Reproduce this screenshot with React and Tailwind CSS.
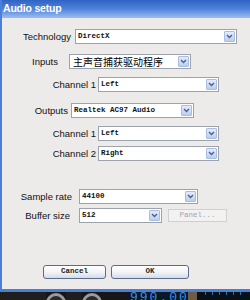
import React from 'react';

const mono = { fontFamily: '"Liberation Mono", monospace' };

const Select = ({ value, width, cjk }) => (
    <div className={`flex h-full items-stretch border border-[#9da3ad] bg-white ${width}`}>
        <span
            className={cjk
                ? 'flex flex-1 items-center pl-[3px] text-[10px] leading-none text-black [font-family:"Noto_Sans_CJK_SC",sans-serif]'
                : 'flex flex-1 items-center pl-[2px] text-[7.5px] font-bold leading-none text-[#111] [font-family:"Liberation_Mono",monospace]'}
        >
            {value}
        </span>
        <span className="m-[1px] flex w-[11px] items-center justify-center rounded-[1px] border border-[#a9bde0] bg-gradient-to-b from-[#e4ecfb] to-[#bccdf0]">
            <svg width="7" height="5" viewBox="0 0 7 5">
                <path d="M1 1 L3.5 3.5 L6 1" fill="none" stroke="#4d6185" strokeWidth="1.4" />
            </svg>
        </span>
    </div>
);

const Row = ({ label, labelW, gap, mt, children }) => (
    <div className={`flex h-[15px] items-center ${mt}`}>
        <span className={`shrink-0 text-right text-[9.5px] leading-none text-[#111] ${labelW}`}>{label}</span>
        <div className={`flex h-full items-center ${gap}`}>{children}</div>
    </div>
);

const Button = ({ children, width }) => (
    <div
        className={`flex h-[14px] items-center justify-center rounded-[3px] border border-[#5a6e8c] bg-gradient-to-b from-white via-[#f3f4f8] to-[#d4dbe8] text-[7.5px] font-bold text-[#222] ${width}`}
        style={mono}
    >
        {children}
    </div>
);

export default function App() {
    return (
        <div className="flex h-[300px] w-[250px] flex-col overflow-hidden bg-[#161616] [font-family:'Liberation_Sans',sans-serif]">
            <div className="flex h-[292px] flex-col border-b-[3px] border-l-2 border-[#4a7fd6]">
                <div className="flex h-[18px] items-center bg-gradient-to-b from-[#2f63c4] via-[#4f83da] to-[#9dbdf0] pl-[1px]">
                    <span className="text-[10.5px] font-bold tracking-[-0.2px] text-white">Audio setup</span>
                </div>
                <div className="flex flex-1 flex-col bg-[#edeaea]">
                    <Row label="Technology" labelW="w-[69px]" gap="ml-[4px]" mt="mt-[11px]">
                        <Select value="DirectX" width="w-[162px]" />
                    </Row>
                    <Row label="Inputs" labelW="w-[56px]" gap="ml-[11px]" mt="mt-[10px]">
                        <Select value="主声音捕获驱动程序" width="w-[122px]" cjk />
                    </Row>
                    <Row label="Channel 1" labelW="w-[94px]" gap="ml-[2px]" mt="mt-[8px]">
                        <Select value="Left" width="w-[121px]" />
                    </Row>
                    <Row label="Outputs" labelW="w-[66px]" gap="ml-[3px]" mt="mt-[11px]">
                        <Select value="Realtek AC97 Audio" width="w-[123px]" />
                    </Row>
                    <Row label="Channel 1" labelW="w-[94px]" gap="ml-[2px]" mt="mt-[8px]">
                        <Select value="Left" width="w-[121px]" />
                    </Row>
                    <Row label="Channel 2" labelW="w-[94px]" gap="ml-[2px]" mt="mt-[5px]">
                        <Select value="Right" width="w-[121px]" />
                    </Row>
                    <Row label="Sample rate" labelW="w-[70px]" gap="ml-[7px]" mt="mt-[28px]">
                        <Select value="44100" width="w-[119px]" />
                    </Row>
                    <Row label="Buffer size" labelW="w-[68px]" gap="ml-[9px]" mt="mt-[4px]">
                        <Select value="512" width="w-[83px]" />
                        <div
                            className="ml-[6px] flex h-[13px] w-[59px] items-center justify-center border border-[#cfd0d4] bg-[#f3f2f2] text-[7.5px] text-[#a4a4a4]"
                            style={mono}
                        >
                            Panel...
                        </div>
                    </Row>
                    <div className="mt-[42px] flex gap-[5px] pl-[41px]">
                        <Button width="w-[63px]">Cancel</Button>
                        <Button width="w-[78px]">OK</Button>
                    </div>
                </div>
            </div>
            <div className="flex h-[8px] items-start">
                <div className="h-full w-[46px] bg-[#1e1e1e]" />
                <div className="mt-[1px] h-[20px] w-[20px] shrink-0 rounded-full border-[3px] border-[#9a9a9a] bg-[#2a2a2a]" />
                <div className="h-full w-[16px] bg-[#1e1e1e]" />
                <div className="mt-[1px] h-[20px] w-[20px] shrink-0 rounded-full border-[3px] border-[#9a9a9a] bg-[#2a2a2a]" />
                <div className="h-full w-[26px] bg-[#161616]" />
                <div className="flex h-full w-[60px] items-start overflow-hidden bg-[#0a1828] pl-[2px]">
                    <span className="-mt-[1px] text-[13px] leading-none tracking-[2px] text-[#3d8fe6]" style={mono}>990.00</span>
                </div>
                <div className="h-full w-[9px] bg-[#6e5c48]" />
                <div className="flex h-full flex-1 items-start gap-[6px] bg-[#081018] pl-[8px]">
                    <span className="h-[3px] w-[1px] bg-[#2f6fb0]" />
                    <span className="h-[3px] w-[1px] bg-[#2f6fb0]" />
                    <span className="h-[3px] w-[1px] bg-[#2f6fb0]" />
                    <span className="h-[3px] w-[1px] bg-[#2f6fb0]" />
                    <span className="h-[3px] w-[1px] bg-[#2f6fb0]" />
                    <span className="h-[3px] w-[1px] bg-[#2f6fb0]" />
                </div>
            </div>
        </div>
    );
}
